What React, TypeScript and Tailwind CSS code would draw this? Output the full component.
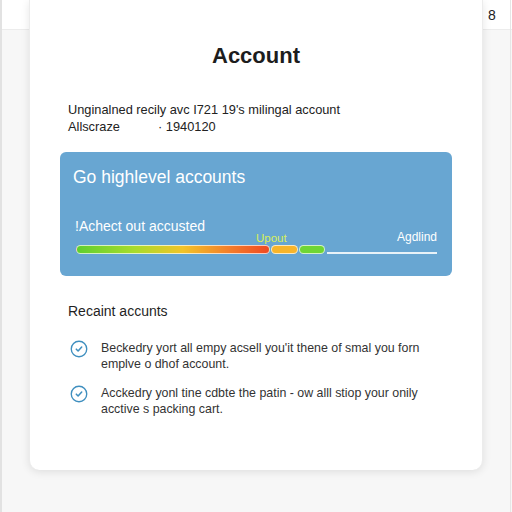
function CheckCircle() {
  return (
    <svg width="18" height="18" viewBox="0 0 20 20" fill="none" className="shrink-0">
      <circle cx="10" cy="10" r="8.6" stroke="#3f8fbf" strokeWidth="1.5" />
      <path d="M7 10.2l2 2 4-4.4" stroke="#3f8fbf" strokeWidth="1.7" strokeLinecap="round" strokeLinejoin="round" />
    </svg>
  );
}

export default function App() {
  return (
    <div
      className="relative w-[512px] h-[512px] overflow-hidden bg-[#f7f7f7]"
      style={{ fontFamily: '"Liberation Sans", Arial, sans-serif' }}
    >
      {/* top strip */}
      <div className="absolute inset-x-0 top-0 h-[30px] bg-white border-b border-[#ececec]" />
      <div className="absolute left-0 top-0 bottom-0 w-[2px] bg-[#e2e2e2]" />
      <div className="absolute right-[1px] top-0 bottom-0 w-px bg-[#e6e6e6]" />
      <div className="absolute left-[488px] top-[5px] text-[14px] text-[#222]">8</div>

      <div className="relative mx-[29px] w-[454px] h-[470px] bg-white rounded-b-[10px] shadow-[0_2px_8px_rgba(0,0,0,0.10)] border-x border-[#ececec] pt-[42px] px-[30px]">
        <h1 className="text-center text-[22px] font-bold text-[#1d1d1d] leading-[28px]">Account</h1>

        <div className="mt-[31px] px-[8px] text-[12.8px] text-[#222] leading-[17px]">
          <p>Unginalned recily avc I721 19's milingal account</p>
          <p className="flex">
            <span className="w-[90px]">Allscraze</span>
            <span>· 1940120</span>
          </p>
        </div>

        <div className="mt-[17px] h-[124px] rounded-[6px] bg-[#68a6d2] px-[13px] pt-[14px]">
          <div className="text-[17.5px] text-white leading-[22px]">Go highlevel accounts</div>
          <div className="mt-[26px] pl-[2px]">
            <span className="text-[14px] text-white leading-[18px]">!Achect out accusted</span>
          </div>
          <div className="relative mt-[7px] flex items-center pl-[3px] pr-[2px]">
            <span className="absolute left-[183px] top-[-13px] text-[11.5px] text-[#d8ef5a] leading-[12px]">Upout</span>
            <span className="absolute right-[2px] top-[-14px] text-[12px] text-white leading-[13px]">Agdlind</span>
            <div className="h-[9px] w-[194px] rounded-full border border-white/70 bg-[linear-gradient(90deg,#5fcf2f,#a8dc2c_30%,#f2c428_55%,#f47c2a_80%,#ef4a22)]" />
            <div className="ml-[1px] h-[9px] w-[27px] rounded-full border border-white/70 bg-[#f8b52a]" />
            <div className="ml-[1px] h-[9px] w-[26px] rounded-full border border-white/70 bg-[#6fd634]" />
            <div className="ml-[2px] mt-[6px] h-[2px] flex-1 bg-white/85" />
          </div>
        </div>

        <div className="mt-[25px] px-[8px] text-[14px] text-[#1f1f1f]">Recaint accunts</div>

        <div className="mt-[18px] flex flex-col gap-[13px] pl-[10px] pr-[8px] text-[12.4px] text-[#333] leading-[16px]">
          <div className="flex items-start gap-[13px]">
            <CheckCircle />
            <p>Beckedry yort all empy acsell you'it thene of smal you forn<br />emplve o dhof account.</p>
          </div>
          <div className="flex items-start gap-[13px]">
            <CheckCircle />
            <p>Acckedry yonl tine cdbte the patin - ow alll stiop your onily<br />acctive s packing cart.</p>
          </div>
        </div>
      </div>
    </div>
  );
}
